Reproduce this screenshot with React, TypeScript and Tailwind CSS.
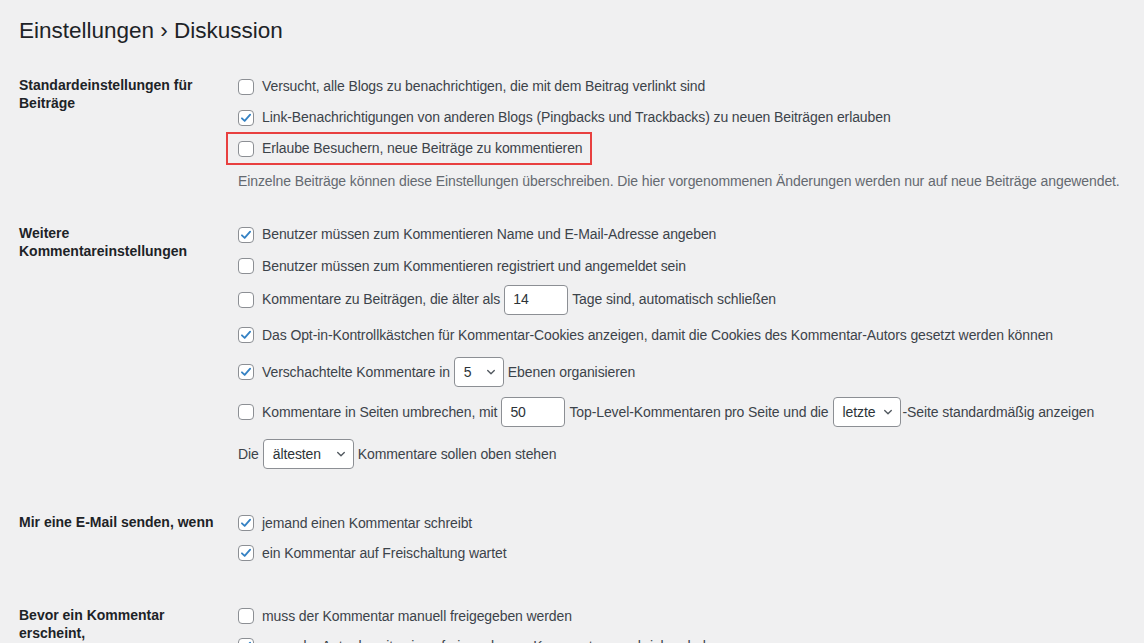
import React from "react";

const FONT = { fontFamily: '"Liberation Sans", Arial, sans-serif' };

function Check({ checked }: { checked?: boolean }) {
  return (
    <span className="relative inline-flex h-[16px] w-[16px] shrink-0 items-center justify-center rounded-[4px] border border-[#8c8f94] bg-white">
      {checked && (
        <svg width="14" height="14" viewBox="0 0 20 20" className="absolute">
          <path d="M4.2 10.4 L8.1 14.2 L15.9 5.2" fill="none" stroke="#3582c4" strokeWidth="2.6" strokeLinecap="round" strokeLinejoin="round" />
        </svg>
      )}
    </span>
  );
}

function TextInput({ value }: { value: string }) {
  return (
    <span className="mx-[4px] inline-flex h-[30px] w-[64px] items-center rounded-[4px] border border-[#8c8f94] bg-white px-[8px] text-[#2c3338]">
      {value}
    </span>
  );
}

function Select({ value, w }: { value: string; w: string }) {
  return (
    <span className={`mx-[4px] inline-flex h-[30px] items-center justify-between rounded-[4px] border border-[#8c8f94] bg-white pl-[9px] pr-[6px] text-[#2c3338] ${w}`}>
      <span>{value}</span>
      <svg width="12" height="12" viewBox="0 0 20 20">
        <path d="M4.5 7.5 L10 13 L15.5 7.5" fill="none" stroke="#50575e" strokeWidth="2.2" strokeLinecap="round" strokeLinejoin="round" />
      </svg>
    </span>
  );
}

function Row({ h, children }: { h: string; children: React.ReactNode }) {
  return <div className={`flex items-center whitespace-nowrap ${h}`}>{children}</div>;
}

function CbRow({ h, checked, children }: { h: string; checked?: boolean; children: React.ReactNode }) {
  return (
    <Row h={h}>
      <Check checked={checked} />
      <span className="ml-[8px] flex items-center">{children}</span>
    </Row>
  );
}

function Section({ label, pb, children }: { label: React.ReactNode; pb: string; children: React.ReactNode }) {
  return (
    <div className={`flex ${pb}`}>
      <div className="w-[210px] shrink-0 pr-[10px] pt-[20px] text-[14px] font-bold leading-[18px] text-[#1d2327]">{label}</div>
      <div className="pl-[9px] pt-[15px] text-[14px] tracking-[-0.1px] text-[#3c434a]">{children}</div>
    </div>
  );
}

export default function App() {
  return (
    <div className="min-h-screen bg-[#f0f0f1] pl-[19px]" style={FONT}>
      <h1 className="pt-[16px] text-[22.5px] font-normal leading-[30px] text-[#1d2327]">Einstellungen › Diskussion</h1>
      <div className="h-[10px]" />
      <Section label={<>Standardeinstellungen für<br />Beiträge</>} pb="pb-[14px]">
        <CbRow h="h-[31px]">Versucht, alle Blogs zu benachrichtigen, die mit dem Beitrag verlinkt sind</CbRow>
        <CbRow h="h-[31px]" checked>Link-Benachrichtigungen von anderen Blogs (Pingbacks und Trackbacks) zu neuen Beiträgen erlauben</CbRow>
        <div className="relative">
          <CbRow h="h-[31px]">Erlaube Besuchern, neue Beiträge zu kommentieren</CbRow>
          <div className="pointer-events-none absolute left-[-12px] top-[-1px] h-[33px] w-[366px] border-2 border-[#e8403f]" />
        </div>
        <div className="mt-[8px] whitespace-nowrap leading-[18px] text-[#646970]">
          Einzelne Beiträge können diese Einstellungen überschreiben. Die hier vorgenommenen Änderungen werden nur auf neue Beiträge angewendet.
        </div>
      </Section>
      <Section label={<>Weitere<br />Kommentareinstellungen</>} pb="pb-[18px]">
        <CbRow h="h-[31px]" checked>Benutzer müssen zum Kommentieren Name und E-Mail-Adresse angeben</CbRow>
        <CbRow h="h-[32px]">Benutzer müssen zum Kommentieren registriert und angemeldet sein</CbRow>
        <CbRow h="h-[35px]">
          Kommentare zu Beiträgen, die älter als <TextInput value="14" /> Tage sind, automatisch schließen
        </CbRow>
        <CbRow h="h-[36px]" checked>Das Opt-in-Kontrollkästchen für Kommentar-Cookies anzeigen, damit die Cookies des Kommentar-Autors gesetzt werden können</CbRow>
        <CbRow h="h-[38px]" checked>
          Verschachtelte Kommentare in <Select value="5" w="w-[50px]" /> Ebenen organisieren
        </CbRow>
        <CbRow h="h-[42px]">
          Kommentare in Seiten umbrechen, mit <TextInput value="50" /> Top-Level-Kommentaren pro Seite und die <Select value="letzte" w="w-[68px] mr-[2px]" />-Seite standardmäßig anzeigen
        </CbRow>
        <Row h="h-[42px]">
          Die <Select value="ältesten" w="w-[91px]" /> Kommentare sollen oben stehen
        </Row>
      </Section>
      <Section label="Mir eine E-Mail senden, wenn" pb="pb-[18px]">
        <CbRow h="h-[30px]" checked>jemand einen Kommentar schreibt</CbRow>
        <CbRow h="h-[30px]" checked>ein Kommentar auf Freischaltung wartet</CbRow>
      </Section>
      <Section label={<>Bevor ein Kommentar<br />erscheint,</>} pb="pb-[18px]">
        <CbRow h="h-[30px]">muss der Kommentar manuell freigegeben werden</CbRow>
        <CbRow h="h-[30px]" checked>muss der Autor bereits einen freigegebenen Kommentar geschrieben haben</CbRow>
      </Section>
    </div>
  );
}
